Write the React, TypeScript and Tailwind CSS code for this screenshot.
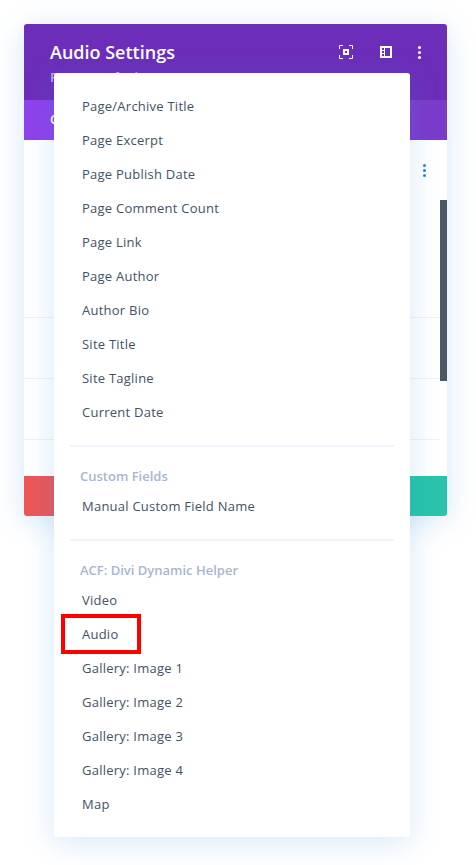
const dynamicItems = [
  "Page/Archive Title",
  "Page Excerpt",
  "Page Publish Date",
  "Page Comment Count",
  "Page Link",
  "Page Author",
  "Author Bio",
  "Site Title",
  "Site Tagline",
  "Current Date",
];

const acfItems = [
  "Video",
  "Audio",
  "Gallery: Image 1",
  "Gallery: Image 2",
  "Gallery: Image 3",
  "Gallery: Image 4",
  "Map",
];

function FocusIcon() {
  return (
    <svg width="14" height="14" viewBox="0 0 14 14" fill="none" stroke="white" strokeWidth="1">
      <path d="M4 .5H.5V4M10 .5h3.5V4M4 13.5H.5V10M10 13.5h3.5V10" />
      <rect x="4" y="4" width="6" height="6" fill="white" stroke="none" />
      <rect x="6" y="6" width="2" height="2" fill="#6c2eb9" stroke="none" />
    </svg>
  );
}

function SplitIcon() {
  return (
    <svg width="12" height="12" viewBox="0 0 12 12">
      <path
        fill="white"
        fillRule="evenodd"
        d="M0 0h12v12H0zM5 2v8h5V2zM2 2v2h2V2zM2 5v2h2V5zM2 8v2h2V8z"
      />
    </svg>
  );
}

function Dots({ className }: { className: string }) {
  return (
    <div className="flex w-[3px] flex-col gap-[2px]">
      <span className={`h-[3px] w-[3px] rounded-full ${className}`} />
      <span className={`h-[3px] w-[3px] rounded-full ${className}`} />
      <span className={`h-[3px] w-[3px] rounded-full ${className}`} />
    </div>
  );
}

function MenuItem({ label }: { label: string }) {
  return (
    <li className="relative flex h-[34px] items-center pl-7 pt-[2px] text-[13px] font-medium tracking-[0.24px] text-[#465160]">
      {label}
      {label === "Audio" && (
        <span className="absolute left-[7px] top-[-3px] h-10 w-20 border-4 border-[#ff0000]" />
      )}
    </li>
  );
}

function SectionHeading({ label }: { label: string }) {
  return (
    <li className="flex h-[26px] items-center pl-[26px] pt-[2px] text-[13px] font-semibold text-[#a9b6cb]">
      {label}
    </li>
  );
}

export default function App() {
  return (
    <div className="relative h-[865px] overflow-hidden bg-white pl-6 pt-6 font-['Open_Sans',sans-serif]">
      <div className="flex h-[492px] w-[423px] flex-col overflow-hidden rounded-[3px] bg-white shadow-[0_5px_30px_rgba(43,135,218,0.2)]">
        <header className="flex h-[76px] shrink-0 justify-between bg-[#6c2eb9] pl-[26px] pr-[26px] pt-[15px]">
          <div>
            <h1 className="text-[18px] font-semibold leading-[26px] text-white">Audio Settings</h1>
            <p className="mt-[3px] text-[13px] font-semibold leading-[18px] text-white/60">Preset: Default</p>
          </div>
          <div className="flex h-[26px] items-center gap-[27px]">
            <FocusIcon />
            <SplitIcon />
            <div className="-ml-px">
              <Dots className="bg-white" />
            </div>
          </div>
        </header>

        <nav className="flex h-10 shrink-0 items-center bg-gradient-to-r from-[#8f42ec] to-[#7b3bc9] pl-[26px] text-[13px] font-semibold text-white">
          Content
        </nav>

        <div className="flex min-h-0 flex-1">
          <div className="flex min-w-0 flex-1 flex-col">
            <div className="flex h-[178px] justify-end border-b border-[#eef2f7] pr-[14px] pt-[24px]">
              <Dots className="bg-[#2b87da]" />
            </div>
            <div className="h-[61px] border-b border-[#eef2f7]" />
            <div className="h-[61px] border-b border-[#eef2f7]" />
          </div>
          <div className="w-[7px] shrink-0 pt-[60px]">
            <div className="h-[181px] bg-[#4c5866]" />
          </div>
        </div>

        <div className="grid h-10 shrink-0 grid-cols-4">
          <div className="bg-gradient-to-r from-[#ef5555] to-[#dc5c66]" />
          <div className="bg-[#7e3bd0]" />
          <div className="bg-[#2b87da]" />
          <div className="bg-[#29c4a9]" />
        </div>
      </div>

      <div className="absolute left-[54px] top-[73px] w-[356px] rounded-[3px] bg-white py-4 shadow-[0_5px_30px_rgba(43,135,218,0.2)]">
        <ul>
          {dynamicItems.map((item) => (
            <MenuItem key={item} label={item} />
          ))}
        </ul>
        <div className="mx-4 mb-[16px] mt-[16px] h-[2px] bg-[#f1f5f9]" />
        <ul>
          <SectionHeading label="Custom Fields" />
          <MenuItem label="Manual Custom Field Name" />
        </ul>
        <div className="mx-4 mb-[16px] mt-[16px] h-[2px] bg-[#f1f5f9]" />
        <ul>
          <SectionHeading label="ACF: Divi Dynamic Helper" />
          {acfItems.map((item) => (
            <MenuItem key={item} label={item} />
          ))}
        </ul>
      </div>
    </div>
  );
}
